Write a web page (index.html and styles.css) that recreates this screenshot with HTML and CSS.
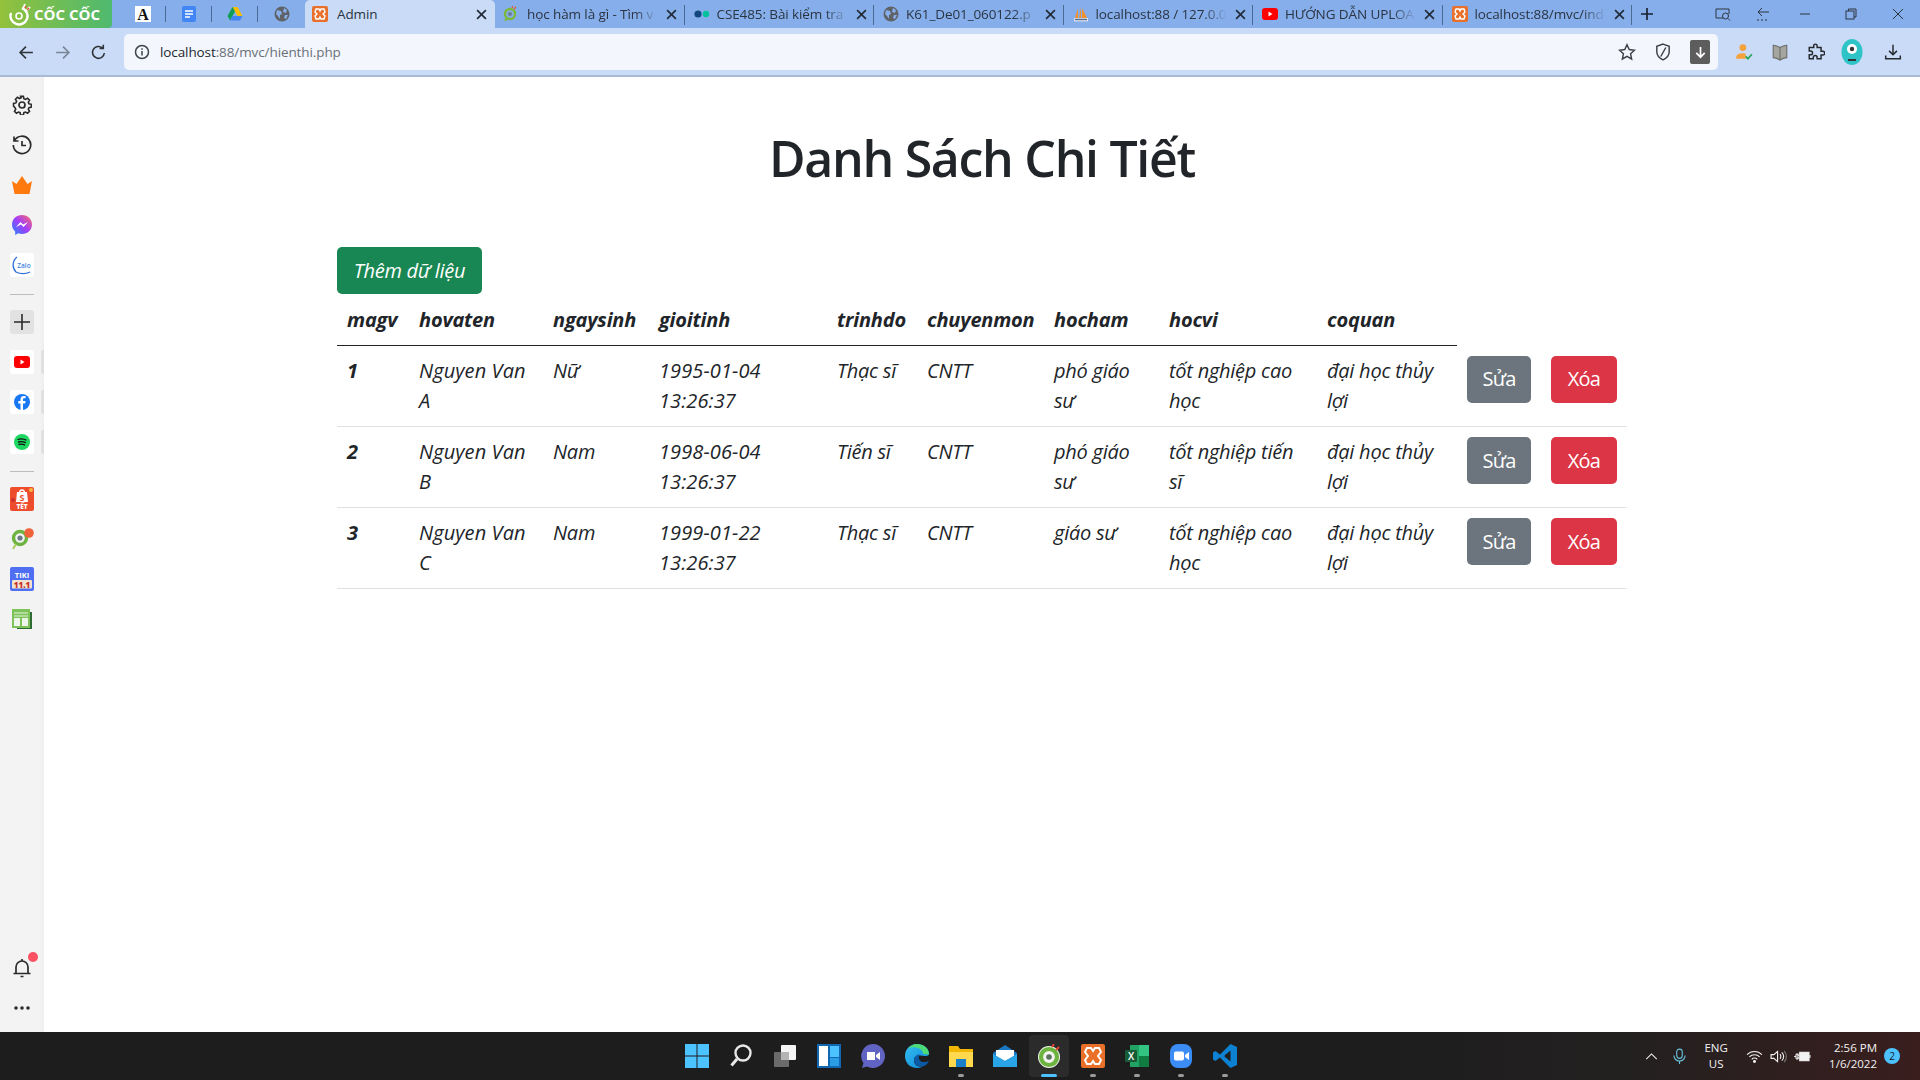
FILE: index.html
```html
<!DOCTYPE html>
<html lang="vi">
<head>
<meta charset="utf-8">
<title>Admin</title>
<link rel="stylesheet" href="styles.css">
</head>
<body>
<header class="tabstrip">
  <div class="brand">
    <svg class="brand-mark" viewBox="0 0 24 24"><circle cx="11" cy="14" r="8.500" fill="none" stroke="#fff" stroke-width="2.400" stroke-dasharray="40 14" transform="rotate(-70 11 14)"/><circle cx="11" cy="14" r="3" fill="none" stroke="#fff" stroke-width="1.600"/><path d="M15 7l2-5M18 9l4-4" stroke="#fff" stroke-width="2"/><path d="M17 6l1-2M19 8l2-2" stroke="#e9472f" stroke-width="1.400"/></svg>
    <span>CỐC CỐC</span>
  </div>
  <div class="pin pin-first">
    <svg class="fav" viewBox="0 0 16 16"><rect width="16" height="16" fill="#fff"/><text x="8" y="14" class="fav-a">A</text></svg>
  </div>
  <div class="pin">
    <svg class="fav" viewBox="0 0 16 16"><rect x="1" width="14" height="16" rx="2" fill="#4285f4"/><path d="M4 5h8M4 8h8M4 11h5" stroke="#fff" stroke-width="1.500"/></svg>
  </div>
  <div class="pin">
    <svg class="fav" viewBox="0 0 16 16"><path d="M5.500 1h5l5 9h-5z" fill="#fbbc04"/><path d="M5.500 1L0.500 10l2.500 4.500L8 5.500z" fill="#0f9d58"/><path d="M3 14.500h10l2.500-4.500H5.500z" fill="#4285f4"/></svg>
  </div>
  <div class="pin pin-last">
    <svg class="fav" viewBox="0 0 16 16"><circle cx="8" cy="8" r="7.500" fill="#5f6368"/><path d="M3 4l4 1 1 3-2 1 0 4-2-3-2-2zM10 2l3 2-1 3-3-1zM11 9l3 0-2 4-2-1z" fill="#86aeea"/></svg>
  </div>
  <div class="tab tab-active">
    <svg class="fav" viewBox="0 0 16 16"><rect width="16" height="16" rx="2" fill="#e9702a"/><path d="M4 3h3l1 2 1-2h3l1 3-2 2 2 2-1 3H9L8 11l-1 2H4l-1-3 2-2-2-2z" fill="none" stroke="#fff" stroke-width="1.400"/></svg>
    <span class="tab-title">Admin</span>
    <svg class="tab-x" viewBox="0 0 10 10"><path d="M1 1l8 8M9 1l-8 8"/></svg>
  </div>
  <div class="tab">
    <svg class="fav fav-coc" viewBox="0 0 16 16"><circle cx="8" cy="8" r="5" fill="none" stroke="#7cb83e" stroke-width="2.400"/><circle cx="8" cy="8" r="2" fill="#6d7d8e"/><path d="M3 15l2-3" stroke="#7cb83e" stroke-width="2"/><path d="M10 2l1-2M12 3l2-2" stroke="#e8532f" stroke-width="1.200"/></svg>
    <span class="tab-title">học hàm là gì - Tìm v</span>
    <svg class="tab-x" viewBox="0 0 10 10"><path d="M1 1l8 8M9 1l-8 8"/></svg>
  </div>
  <div class="tab">
    <svg class="fav" viewBox="0 0 16 16"><circle cx="4" cy="8" r="3.600" fill="#11477e"/><circle cx="12" cy="8" r="3.200" fill="#00c29a"/></svg>
    <span class="tab-title">CSE485: Bài kiểm tra</span>
    <svg class="tab-x" viewBox="0 0 10 10"><path d="M1 1l8 8M9 1l-8 8"/></svg>
  </div>
  <div class="tab">
    <svg class="fav" viewBox="0 0 16 16"><circle cx="8" cy="8" r="7.500" fill="#5f6368"/><path d="M3 4l4 1 1 3-2 1 0 4-2-3-2-2zM10 2l3 2-1 3-3-1zM11 9l3 0-2 4-2-1z" fill="#86aeea"/></svg>
    <span class="tab-title">K61_De01_060122.p</span>
    <svg class="tab-x" viewBox="0 0 10 10"><path d="M1 1l8 8M9 1l-8 8"/></svg>
  </div>
  <div class="tab">
    <svg class="fav" viewBox="0 0 16 16"><path d="M2 12L5 2v10zM6 12L8 1v11zM9 12V2l5 10z" fill="#f0912e"/><rect x="1" y="12" width="14" height="3.400" fill="#dfe6f2"/><path d="M2 13.500h12" stroke="#5a6c8c" stroke-width="1.400"/></svg>
    <span class="tab-title">localhost:88 / 127.0.0</span>
    <svg class="tab-x" viewBox="0 0 10 10"><path d="M1 1l8 8M9 1l-8 8"/></svg>
  </div>
  <div class="tab">
    <svg class="fav" viewBox="0 0 16 16"><rect y="2" width="16" height="12" rx="3" fill="#f00"/><path d="M6.500 5.500v5l4-2.500z" fill="#fff"/></svg>
    <span class="tab-title">HƯỚNG DẪN UPLOA</span>
    <svg class="tab-x" viewBox="0 0 10 10"><path d="M1 1l8 8M9 1l-8 8"/></svg>
  </div>
  <div class="tab">
    <svg class="fav" viewBox="0 0 16 16"><rect width="16" height="16" rx="2" fill="#e9702a"/><path d="M4 3h3l1 2 1-2h3l1 3-2 2 2 2-1 3H9L8 11l-1 2H4l-1-3 2-2-2-2z" fill="none" stroke="#fff" stroke-width="1.400"/></svg>
    <span class="tab-title">localhost:88/mvc/ind</span>
    <svg class="tab-x" viewBox="0 0 10 10"><path d="M1 1l8 8M9 1l-8 8"/></svg>
  </div>
  <svg class="newtab" viewBox="0 0 12 12"><path d="M6 0v12M0 6h12"/></svg>
  <div class="winctl">
    <svg class="ctl" viewBox="0 0 16 16"><path d="M14 8V3H1v9h7"/><circle cx="10.500" cy="10" r="3"/><path d="M13 12.500l2 2"/></svg>
    <svg class="ctl" viewBox="0 0 16 16"><path d="M7 2L3 6l4 4M3 6h11M2 14h2M6 14h2M10 14h2"/></svg>
    <svg class="ctl" viewBox="0 0 16 16"><path d="M3 8h10"/></svg>
    <svg class="ctl" viewBox="0 0 16 16"><rect x="3" y="5" width="8" height="8"/><path d="M5.500 5V3H13v8h-2"/></svg>
    <svg class="ctl" viewBox="0 0 16 16"><path d="M3 3l10 10M13 3L3 13"/></svg>
  </div>
</header>

<nav class="toolbar">
  <svg class="nav-ic" viewBox="0 0 16 16"><path d="M14 8H2M7.500 2.500L2 8l5.500 5.500"/></svg>
  <svg class="nav-ic nav-off" viewBox="0 0 16 16"><path d="M2 8h12M8.500 2.500L14 8l-5.500 5.500"/></svg>
  <svg class="nav-ic" viewBox="0 0 16 16"><path d="M13.500 8.500A5.600 5.600 0 1 1 11.500 3.600M12.500 0.800v3.400H9"/></svg>
  <div class="omnibox">
    <svg class="info" viewBox="0 0 16 16"><circle cx="8" cy="8" r="6.500"/><path d="M8 7v4.500M8 4.300v1.500"/></svg>
    <span class="url"><span class="host">localhost</span>:88/mvc/hienthi.php</span>
    <svg class="omni-ic" viewBox="0 0 16 16"><path d="M8 1.500l2 4.300 4.600.6-3.400 3.200.9 4.600L8 11.900l-4.100 2.300.9-4.600L1.400 6.400 6 5.800z"/></svg>
    <svg class="omni-ic" viewBox="0 0 16 16"><path d="M8 1l5.500 2v5c0 3.500-2.500 5.500-5.500 7-3-1.500-5.500-3.500-5.500-7V3zM10.500 4L6 12"/></svg>
    <span class="dl-box"><svg viewBox="0 0 16 16"><path d="M8 2v11M3.500 8.500L8 13l4.500-4.500"/></svg></span>
  </div>
  <svg class="ext ext-person" viewBox="0 0 16 16"><circle cx="7" cy="4" r="3" fill="#f5a13c"/><path d="M1 14c0-4 2-5 6-5 1 0 2 .2 2.500.5V14z" fill="#f5a13c"/><path d="M9.500 12l2 2 3.500-4" fill="none" stroke="#2aa65a" stroke-width="1.600"/></svg>
  <svg class="ext" viewBox="0 0 16 16"><path d="M2 2c2 0 4 1 6 2v11c-2-1-4-2-6-2zM14 2c-2 0-4 1-6 2v11c2-1 4-2 6-2z" fill="#a5a5a0" stroke="#6e6e6a"/></svg>
  <svg class="ext ext-line" viewBox="0 0 16 16"><path d="M6 2.500a1.500 1.500 0 0 1 3 0V4h3.500v3.300H14a1.700 1.700 0 0 1 0 3.400h-1.500V14H9v-1.200a1.700 1.700 0 0 0-3.400 0V14H2v-3.500h1.200a1.700 1.700 0 0 0 0-3.400H2V4h4z"/></svg>
  <svg class="ext ext-avatar" viewBox="0 0 22 26"><ellipse cx="11" cy="13" rx="10.500" ry="13" fill="#2ec4c7"/><circle cx="11" cy="10" r="5" fill="#fff"/><circle cx="11" cy="10" r="2.200" fill="#333"/><path d="M7 21h8" stroke="#333" stroke-width="2"/></svg>
  <svg class="ext ext-line ext-dl" viewBox="0 0 16 16"><path d="M8 1.500v9M4.500 7L8 10.500 11.500 7M1.500 11v3h13v-3"/></svg>
</nav>

<div class="middle">
  <aside class="sidebar">
    <div class="side-slot"><svg class="side-ic side-line" viewBox="0 0 20 20"><circle cx="10" cy="10" r="3"/><path d="M8.500 1h3l.5 2.500 1.700.8 2.200-1.300 2.100 2.100-1.300 2.200.7 1.700 2.600.5v3l-2.600.5-.7 1.700 1.300 2.200-2.100 2.100-2.200-1.300-1.700.7-.5 2.600h-3l-.5-2.600-1.700-.7-2.200 1.300-2.100-2.100 1.300-2.200-.7-1.700L1 11.500v-3l2.500-.5.800-1.700L3 4.100 5.100 2l2.200 1.300L9 2.500z" transform="translate(.6 .4) scale(.94)"/></svg></div>
    <div class="side-slot"><svg class="side-ic side-line" viewBox="0 0 20 20"><path d="M2.500 5.500A8.700 8.700 0 1 1 1.300 10M2 1.500v4.500h4.500M10 6v4.500h4"/></svg></div>
    <div class="side-slot"><svg class="side-ic" viewBox="0 0 20 20"><path d="M0 6l4.500 3L10 1l5.500 8L20 6l-2.500 13h-15z" fill="#ff7a0e"/></svg></div>
    <div class="side-slot"><svg class="side-ic" viewBox="0 0 20 20"><defs><linearGradient id="msg" x1="0" y1="1" x2="1" y2="0"><stop offset="0" stop-color="#1e88ff"/><stop offset=".5" stop-color="#a23dfb"/><stop offset="1" stop-color="#ff6b68"/></linearGradient></defs><path d="M10 0C4.400 0 0 4.100 0 9.500c0 2.900 1.200 5.300 3.200 7V20l3-1.700c1.200.4 2.500.7 3.800.7 5.600 0 10-4.100 10-9.500S15.600 0 10 0z" fill="url(#msg)"/><path d="M4 12l4.500-5 2.500 2.500L16 7l-4.500 5L9 9.500z" fill="#fff"/></svg></div>
    <div class="side-slot"><div class="tile"><svg class="tile-square" viewBox="0 0 24 24"><path d="M7 4C2 8 2 15 6 19c4 2 10 2 14 0" fill="none" stroke="#2f6fd8" stroke-width="1.300"/><text x="14" y="14.500" class="zalo">Zalo</text></svg></div></div>
    <div class="side-sep"></div>
    <div class="side-slot"><div class="tile tile-add"><svg class="plus" viewBox="0 0 16 16"><path d="M8 0v16M0 8h16"/></svg></div></div>
    <div class="side-slot"><div class="tile"><svg class="tile-ic" viewBox="0 0 16 16"><rect y="2" width="16" height="12" rx="3" fill="#f00"/><path d="M6.500 5.500v5l4-2.500z" fill="#fff"/></svg></div><span class="handle"></span></div>
    <div class="side-slot"><div class="tile"><svg class="tile-ic" viewBox="0 0 16 16"><circle cx="8" cy="8" r="8" fill="#1877f2"/><path d="M9 16V9.500h2.200l.4-2.500H9V5.600c0-.8.300-1.300 1.400-1.300h1.200V2.100C11.200 2 10.500 2 9.800 2 7.800 2 6.500 3.200 6.500 5.300V7H4.300v2.500h2.200V16z" fill="#fff"/></svg></div><span class="handle"></span></div>
    <div class="side-slot"><div class="tile"><svg class="tile-ic" viewBox="0 0 16 16"><circle cx="8" cy="8" r="8" fill="#1ed760"/><path d="M3.500 5.500c3-1 6.500-.7 9 .8M4 8c2.500-.7 5.500-.5 7.800.7M4.500 10.500c2-.5 4.500-.4 6.500.6" fill="none" stroke="#111" stroke-width="1.300"/></svg></div><span class="handle"></span></div>
    <div class="side-sep"></div>
    <div class="side-slot"><svg class="tile-square" viewBox="0 0 24 24"><rect width="24" height="24" rx="2" fill="#ee4d2d"/><path d="M7 5h10l1 10H6z" fill="#fff"/><path d="M9.500 6c0-4 5-4 5 0" fill="none" stroke="#fff" stroke-width="1.300"/><text x="12" y="13.500" class="shop-s">S</text><text x="12" y="22" class="shop-t">TẾT</text><circle cx="21" cy="3" r="2" fill="#f6b73c"/><circle cx="3" cy="13" r="2" fill="#c9302a"/></svg></div>
    <div class="side-slot"><svg class="side-ic side-coc" viewBox="0 0 24 24"><circle cx="10" cy="11" r="6.500" fill="none" stroke="#6db33f" stroke-width="3.400"/><circle cx="10" cy="11" r="2.600" fill="#6b7a85"/><path d="M3 22l3-5" stroke="#a8cc5c" stroke-width="2"/><circle cx="19" cy="6" r="4.800" fill="#f0623a"/></svg></div>
    <div class="side-slot"><svg class="tile-square" viewBox="0 0 24 24"><rect width="24" height="24" rx="2" fill="#4f6ef2"/><text x="12" y="11" class="tiki-a">TIKI</text><rect x="2" y="13" width="20" height="8.500" rx="1" fill="#f2e3d0"/><text x="12" y="20.500" class="tiki-b">11.1</text></svg></div>
    <div class="side-slot"><svg class="side-ic side-sheet" viewBox="0 0 20 20"><path d="M18 3h2v17H5v-1h13z" fill="#2f6b34"/><rect width="18" height="19" fill="#7dc35a"/><path d="M2 4h14M2 7h14" stroke="#e8f5dd"/><rect x="2" y="9" width="6" height="8" fill="#eef5ea"/><rect x="10" y="9" width="6" height="8" fill="#eef5ea"/></svg></div>
    <div class="side-bottom">
      <div class="side-slot side-bell">
        <svg class="side-ic side-line" viewBox="0 0 20 20"><path d="M4 15V9a6 6 0 0 1 12 0v6M1.500 15.500h17M8.500 18.500h3M10 1v2"/></svg>
        <span class="dot"></span>
      </div>
      <div class="side-slot"><svg class="dots" viewBox="0 0 16 4"><circle cx="2" cy="2" r="1.800"/><circle cx="8" cy="2" r="1.800"/><circle cx="14" cy="2" r="1.800"/></svg></div>
    </div>
  </aside>

  <main class="content">
    <h1 class="title">Danh Sách Chi Tiết</h1>
    <a class="btn btn-add">Thêm dữ liệu</a>
    <table class="grid">
      <colgroup>
        <col class="c1"><col class="c2"><col class="c3"><col class="c4"><col class="c5"><col class="c6"><col class="c7"><col class="c8"><col class="c9"><col class="c10"><col class="c11">
      </colgroup>
      <thead>
        <tr><th>magv</th><th>hovaten</th><th>ngaysinh</th><th>gioitinh</th><th>trinhdo</th><th>chuyenmon</th><th>hocham</th><th>hocvi</th><th>coquan</th></tr>
      </thead>
      <tbody>
        <tr>
          <th>1</th><td class="name">Nguyen Van A</td><td>Nữ</td><td class="num">1995-01-04 13:26:37</td><td>Thạc sĩ</td><td>CNTT</td><td>phó giáo sư</td><td>tốt nghiệp cao học</td><td>đại học thủy lợi</td>
          <td><a class="btn btn-edit">Sửa</a></td><td><a class="btn btn-del">Xóa</a></td>
        </tr>
        <tr>
          <th>2</th><td class="name">Nguyen Van B</td><td>Nam</td><td class="num">1998-06-04 13:26:37</td><td>Tiến sĩ</td><td>CNTT</td><td>phó giáo sư</td><td>tốt nghiệp tiến sĩ</td><td>đại học thủy lợi</td>
          <td><a class="btn btn-edit">Sửa</a></td><td><a class="btn btn-del">Xóa</a></td>
        </tr>
        <tr>
          <th>3</th><td class="name">Nguyen Van C</td><td>Nam</td><td class="num">1999-01-22 13:26:37</td><td>Thạc sĩ</td><td>CNTT</td><td>giáo sư</td><td>tốt nghiệp cao học</td><td>đại học thủy lợi</td>
          <td><a class="btn btn-edit">Sửa</a></td><td><a class="btn btn-del">Xóa</a></td>
        </tr>
      </tbody>
    </table>
  </main>
</div>

<footer class="taskbar">
  <div></div>
  <div class="apps">
    <div class="app"><svg viewBox="0 0 24 24"><path d="M0 0h11.500v11.500H0zM12.500 0H24v11.500H12.500zM0 12.500h11.500V24H0zM12.500 12.500H24V24H12.500z" fill="#4cc2ff"/></svg></div>
    <div class="app"><svg viewBox="0 0 24 24"><circle cx="14" cy="9" r="7.500" fill="none" stroke="#e8e8e8" stroke-width="2.400"/><path d="M8 15l-5.500 6.500" stroke="#e8e8e8" stroke-width="3"/></svg></div>
    <div class="app"><svg viewBox="0 0 24 24"><rect x="8" y="1" width="15" height="15" rx="1" fill="#f5f5f5"/><rect x="1" y="8" width="15" height="15" rx="1" fill="#6a6a6a"/><rect x="8" y="8" width="8" height="8" fill="#b4b4b4"/></svg></div>
    <div class="app"><svg viewBox="0 0 24 24"><rect width="24" height="24" fill="#1167b1"/><rect x="2" y="2" width="9" height="20" fill="#fff"/><rect x="13" y="2" width="9" height="11" fill="#4cc2ff"/><rect x="13" y="14" width="9" height="8" fill="#2a9fe8"/></svg></div>
    <div class="app"><svg viewBox="0 0 24 24"><path d="M12 0a12 12 0 1 1-6 22.400L1 24l1.500-5A12 12 0 0 1 12 0z" fill="#6264c4"/><path d="M6 8h8v8H6zM15 11l4-3v8l-4-3z" fill="#fff"/></svg></div>
    <div class="app"><svg viewBox="0 0 24 24"><defs><linearGradient id="edge" x1="0" y1="0" x2="1" y2="1"><stop offset="0" stop-color="#35c1f1"/><stop offset="1" stop-color="#0b84d8"/></linearGradient></defs><path d="M12 0C5 0 0 5 0 12c0 7 5 12 12 12 2 0 4-.5 6-1.500-5 1-9-2-9-6 0-3 2-5 5-5 4 0 10 2 10-2C24 4 18 0 12 0z" fill="url(#edge)"/><path d="M24 10.500C24 4 18 0 12 0 8 0 5 2 3 5c3-2 7-2 10-1 3 1 5 3 5 6z" fill="#4ddb78"/><path d="M9 16c0 4 4 7 9 6.500 3-1 5-3 6-6-3 2-7 2-9 0-2-2-1-5 0-6-3 0-6 2-6 5.500z" fill="#0c5aa6"/></svg></div>
    <div class="app app-on"><svg viewBox="0 0 24 24"><path d="M0 2h9l2 3h13v5H0z" fill="#f2b705"/><path d="M0 8h24v15H0z" fill="#ffd84d"/><rect x="7" y="15" width="10" height="8" fill="#1a7fc9"/></svg></div>
    <div class="app"><svg viewBox="0 0 24 24"><path d="M0 9L12 1l12 8v14H0z" fill="#1a78c2"/><path d="M3 6h18v6l-9 5-9-5z" fill="#fff"/><path d="M0 23V10l12 7 12-7v13z" fill="#29a4e6"/></svg></div>
    <div class="app app-current"><svg viewBox="0 0 24 24"><circle cx="12" cy="13" r="11" fill="#f2f2ee"/><circle cx="12" cy="13" r="8" fill="none" stroke="#6db33f" stroke-width="4.200"/><circle cx="12" cy="13" r="2.800" fill="#5c7061"/><path d="M15 3l2-3M19 6l3-3" stroke="#e8472f" stroke-width="1.800"/></svg><span class="running"></span></div>
    <div class="app app-on"><svg viewBox="0 0 24 24"><rect width="24" height="24" rx="2" fill="#e9702a"/><path d="M6 4h4l2 3 2-3h4l2 4-3 4 3 4-2 4h-4l-2-3-2 3H6l-2-4 3-4-3-4z" fill="none" stroke="#fff" stroke-width="2"/></svg></div>
    <div class="app app-on"><svg viewBox="0 0 24 24"><rect x="5" y="1" width="19" height="22" rx="1" fill="#21a366"/><rect x="14" y="1" width="10" height="11" fill="#33c481"/><rect x="14" y="12" width="10" height="11" fill="#107c41"/><rect y="6" width="12" height="12" rx="1" fill="#185c37"/><text x="6" y="16" class="xls">X</text></svg></div>
    <div class="app app-on"><svg viewBox="0 0 24 24"><rect x="1" width="22" height="24" rx="8" fill="#3b8cf5"/><rect x="5" y="7.500" width="10" height="9" rx="1.800" fill="#fff"/><path d="M16 11l4-3v8l-4-3z" fill="#fff"/></svg></div>
    <div class="app app-on"><svg viewBox="0 0 24 24"><path d="M17.500 0L24 3v18l-6.500 3L7 13.500l-4.500 3.500L0 15.500v-7L2.500 7 7 10.500zM17.500 6.500L11 12l6.500 5.500z" fill="#0e82d2"/></svg></div>
  </div>
  <div class="tray">
    <svg class="tray-ic tray-chev" viewBox="0 0 14 8"><path d="M1 7l6-6 6 6"/></svg>
    <svg class="tray-ic tray-mic" viewBox="0 0 14 18"><rect x="4" y="1" width="6" height="10" rx="3"/><path d="M1 8a6 6 0 0 0 12 0M7 14v3"/></svg>
    <div class="lang"><span>ENG</span><span>US</span></div>
    <svg class="tray-ic tray-wifi" viewBox="0 0 18 14"><path d="M1 5a11 11 0 0 1 16 0M3.500 7.500a7.500 7.500 0 0 1 11 0M6 10a4 4 0 0 1 6 0"/><circle cx="9" cy="12.300" r="1" class="tray-fill"/></svg>
    <svg class="tray-ic tray-vol" viewBox="0 0 18 14"><path d="M1 5v4h3l4 3.500v-11L4 5zM10.500 4.500a3.500 3.500 0 0 1 0 5M12.500 2.500a6 6 0 0 1 0 9"/><path class="tray-dim" d="M15 1a8.500 8.500 0 0 1 0 12"/></svg>
    <svg class="tray-ic tray-bat" viewBox="0 0 18 14"><path d="M0 7h2M2 4.500v5M2 4.500h2v5H2M4 5.500h1.500M4 8.500h1.500"/><rect x="6" y="2.500" width="10" height="9" class="tray-fill"/><path d="M17 5.500v3"/></svg>
    <div class="clock"><span>2:56 PM</span><span>1/6/2022</span></div>
    <span class="badge">2</span>
  </div>
</footer>
</body>
</html>
```

FILE: styles.css
```css
* { box-sizing: border-box; }
html, body { margin: 0; height: 100%; }
body {
  width: 1920px;
  height: 1080px;
  overflow: hidden;
  display: flex;
  flex-direction: column;
  font-family: "Open Sans", "Noto Sans", sans-serif;
  color: #212529;
  background: #fff;
}

/* tab strip */
.tabstrip {
  height: 28px;
  flex: none;
  display: flex;
  align-items: center;
  background: #86aeea;
}
.brand {
  width: 112px;
  height: 28px;
  display: flex;
  align-items: center;
  gap: 2px;
  padding-left: 8px;
  background: linear-gradient(90deg, #93c13c, #4eb96f);
  border-radius: 0 0 4px 0;
  color: #fff;
  font-size: 15px;
  font-weight: 700;
  white-space: nowrap;
}
.brand-mark { width: 24px; height: 24px; }
.pin {
  width: 46px;
  height: 16px;
  display: flex;
  justify-content: center;
  border-right: 1px solid #4d6a94;
}
.pin-first { width: 54px; justify-content: flex-start; padding-left: 23px; }
.pin-last { border-right: 0; width: 47px; }
.fav { width: 16px; height: 16px; flex: none; }
.fav-coc { margin-left: -2px; margin-right: 2px; }
.fav-a { font-family: "Liberation Serif", serif; font-size: 16px; font-weight: 700; text-anchor: middle; fill: #111; }
.tab {
  width: 189.500px;
  height: 28px;
  flex: none;
  display: flex;
  align-items: center;
  padding-left: 9px;
  position: relative;
}
.tab::after {
  content: "";
  position: absolute;
  right: 0;
  top: 5px;
  height: 20px;
  width: 1px;
  background: #4d6a94;
}
.tab-active {
  background: #c9dbf6;
  border-radius: 5px 5px 0 0;
  width: 190px;
  padding-left: 7px;
}
.tab-active::after { display: none; }
.tab-title {
  font-size: 13.500px;
  margin-left: 7px;
  width: 131px;
  flex: none;
  white-space: nowrap;
  overflow: hidden;
  letter-spacing: -.1px;
  color: #2b3442;
  -webkit-mask-image: linear-gradient(90deg, #000 82%, transparent);
  mask-image: linear-gradient(90deg, #000 82%, transparent);
}
.tab-active .tab-title { margin-left: 9px; width: 131px; -webkit-mask-image: none; mask-image: none; }
.tab-x {
  width: 11px;
  height: 11px;
  margin-left: 8px;
  flex: none;
  fill: none;
  stroke: #222c38;
  stroke-width: 1.500;
}
.newtab {
  width: 12px;
  height: 12px;
  margin-left: 9px;
  fill: none;
  stroke: #1b2230;
  stroke-width: 1.700;
}
.winctl {
  margin-left: auto;
  display: flex;
  align-items: center;
  padding-right: 14px;
}
.ctl {
  width: 16px;
  height: 16px;
  margin-left: 24px;
  fill: none;
  stroke: #2c3440;
  stroke-width: 1;
}
.ctl:nth-child(3) { margin-left: 26px; }
.ctl:nth-child(4) { margin-left: 30px; }
.ctl:nth-child(5) { margin-left: 31px; }

/* toolbar */
.toolbar {
  height: 49px;
  flex: none;
  display: flex;
  align-items: center;
  padding: 1px 0 0 18px;
  background: #c9dbf6;
  border-bottom: 2px solid #aab9d6;
}
.nav-ic {
  width: 17px;
  height: 17px;
  margin-right: 19px;
  fill: none;
  stroke: #2f3339;
  stroke-width: 1.500;
}
.nav-off { stroke: #7c8596; }
.omnibox {
  width: 1594px;
  height: 36px;
  margin-left: -2px;
  display: flex;
  align-items: center;
  padding: 0 8px 0 10px;
  background: #f3f7fd;
  border-radius: 5px;
}
.info {
  width: 16px;
  height: 16px;
  fill: none;
  stroke: #3f444b;
  stroke-width: 1.500;
}
.url {
  margin-left: 10px;
  font-size: 13.500px;
  letter-spacing: -.1px;
  color: #6a7078;
  margin-right: auto;
}
.host { color: #23272d; }
.omni-ic {
  width: 18px;
  height: 18px;
  margin-right: 18px;
  fill: none;
  stroke: #3d4147;
  stroke-width: 1.300;
}
.dl-box {
  width: 20px;
  height: 24px;
  display: flex;
  align-items: center;
  justify-content: center;
  background: #5d5d5d;
  border-radius: 2px;
}
.dl-box svg { width: 15px; height: 15px; fill: none; stroke: #fff; stroke-width: 1.800; }
.ext { width: 18px; height: 18px; margin-left: 18px; flex: none; }
.ext-person { margin-left: 17px; }
.ext-line { fill: none; stroke: #25282c; stroke-width: 1.300; }
.ext-avatar { width: 22px; height: 26px; margin-left: 16px; }
.ext-dl { margin-left: 21px; }

/* sidebar */
.middle { flex: 1; display: flex; min-height: 0; }
.sidebar {
  width: 44px;
  flex: none;
  display: flex;
  flex-direction: column;
  padding: 8px 0 4px;
  background: linear-gradient(90deg, #f3f3f3 40px, #eeeeee);
}
.side-slot {
  height: 40px;
  flex: none;
  display: flex;
  align-items: center;
  justify-content: center;
  position: relative;
}
.side-sep {
  height: 1px;
  margin: 9px 10px 7px;
  flex: none;
  background: #bdbdbd;
}
.side-ic { width: 20px; height: 20px; }
.side-line { fill: none; stroke: #2b2b2b; stroke-width: 1.700; }
.tile {
  width: 24px;
  height: 24px;
  display: flex;
  align-items: center;
  justify-content: center;
  background: #fff;
  border-radius: 3px;
}
.tile-add { background: #e2e2e2; }
.plus { width: 16px; height: 16px; fill: none; stroke: #2b2b2b; stroke-width: 1.600; }
.tile-ic { width: 16px; height: 16px; }
.tile-square { width: 24px; height: 24px; }
.zalo { font-size: 6.500px; font-weight: 600; fill: #3c7fe0; text-anchor: middle; }
.shop-s { font-size: 9px; font-weight: 700; fill: #ee4d2d; text-anchor: middle; }
.shop-t { font-size: 6.500px; font-weight: 800; fill: #fff; text-anchor: middle; }
.tiki-a { font-size: 7.500px; font-weight: 700; fill: #fff; text-anchor: middle; }
.tiki-b { font-size: 8px; font-weight: 800; fill: #c9302a; text-anchor: middle; }
.xls { font-size: 10px; font-weight: 600; fill: #fff; text-anchor: middle; }
.handle {
  position: absolute;
  right: 0;
  top: 8px;
  width: 3px;
  height: 24px;
  background: #e0e0e0;
  border-radius: 2px 0 0 2px;
}
.side-coc { width: 24px; height: 24px; }
.side-sheet { width: 20px; height: 20px; }
.side-bottom { margin-top: auto; display: flex; flex-direction: column; }
.side-bell { height: 41px; }
.dot {
  position: absolute;
  top: 5px;
  right: 6px;
  width: 10px;
  height: 10px;
  border-radius: 50%;
  background: #fb5162;
}
.dots { width: 16px; height: 4px; fill: #2b2b2b; }

/* page */
.content {
  flex: 1;
  padding: 0 293px;
  display: flex;
  flex-direction: column;
  align-items: flex-start;
}
.title {
  align-self: stretch;
  margin: 51px 0 59px;
  text-align: center;
  font-size: 50px;
  line-height: 60px;
  font-weight: 600;
  letter-spacing: -1.300px;
}
.btn {
  display: inline-block;
  padding: 7.500px 15px;
  font-size: 20px;
  line-height: 30px;
  border: 1.250px solid transparent;
  border-radius: 5px;
  color: #fff;
  letter-spacing: -.7px;
  font-style: normal;
  white-space: nowrap;
  text-align: center;
}
.btn-add { background: #198754; font-style: italic; width: 145px; padding-left: 0; padding-right: 0; letter-spacing: -.3px; }
.btn-edit { background: #6c757d; width: 64px; padding-left: 0; padding-right: 0; }
.btn-del { background: #dc3545; width: 66px; padding-left: 0; padding-right: 0; }
.grid {
  width: 1290px;
  margin-top: 1px;
  table-layout: fixed;
  border-collapse: collapse;
  font-size: 20px;
  line-height: 30px;
  font-style: italic;
}
.c1 { width: 72px; }
.c2 { width: 134px; }
.c3 { width: 106px; }
.c4 { width: 178px; }
.c5 { width: 90px; }
.c6 { width: 127px; }
.c7 { width: 115px; }
.c8 { width: 158px; }
.c9 { width: 140px; }
.c10 { width: 84px; }
.c11 { width: 86px; }
.grid th, .grid td {
  padding: 10px;
  vertical-align: top;
  text-align: left;
}
.grid td { letter-spacing: -.25px; }
.grid td.num { letter-spacing: .1px; }
.grid td.name { letter-spacing: .1px; }
.grid th { font-weight: 700; letter-spacing: -.2px; }
.grid thead th { border-bottom: 1px solid #212529; }
.grid tbody tr { border-bottom: 1px solid #dee2e6; }

/* taskbar */
.taskbar {
  height: 48px;
  flex: none;
  display: grid;
  grid-template-columns: 1fr auto 1fr;
  align-items: center;
  padding-left: 2px;
  background: linear-gradient(90deg, #1d1d1d 70%, #232020 85%, #3a1e1e);
  color: #f2f2f2;
}
.apps { display: flex; height: 100%; align-items: center; }
.app {
  width: 44px;
  height: 42px;
  display: flex;
  align-items: center;
  justify-content: center;
  position: relative;
}
.app svg { width: 24px; height: 24px; }
.app-on::after, .app-current .running {
  content: "";
  position: absolute;
  bottom: 0;
  left: 50%;
  width: 6px;
  height: 3px;
  margin-left: -3px;
  border-radius: 2px;
  background: #9b9b9b;
}
.app-current { background: #2b2b2b; border-radius: 4px; width: 40px; margin: 0 2px; }
.app-current .running { width: 16px; margin-left: -8px; background: #4cc2ff; }
.tray {
  display: flex;
  align-items: center;
  justify-content: flex-end;
  padding-right: 20px;
}
.tray-ic { fill: none; stroke: #f2f2f2; stroke-width: 1.200; flex: none; }
.tray-fill { fill: #f2f2f2; }
.tray-dim { stroke: #777; }
.tray-chev { width: 13px; height: 7px; margin-right: 15px; }
.tray-mic { width: 13px; height: 17px; stroke: #67c1dc; margin-right: 13px; }
.lang, .clock {
  display: flex;
  flex-direction: column;
  font-size: 11.500px;
  line-height: 16px;
  align-items: center;
}
.lang { margin-right: 13px; width: 34px; }
.tray-wifi { width: 17px; height: 13px; margin-right: 7px; }
.tray-vol { width: 17px; height: 13px; margin-right: 7px; }
.tray-bat { width: 17px; height: 13px; margin-right: 18px; }
.clock { align-items: flex-end; }
.badge {
  width: 16px;
  height: 16px;
  margin-left: 7px;
  border-radius: 50%;
  background: #4cc2ff;
  color: #14202a;
  font-size: 10px;
  line-height: 16px;
  text-align: center;
}
```
